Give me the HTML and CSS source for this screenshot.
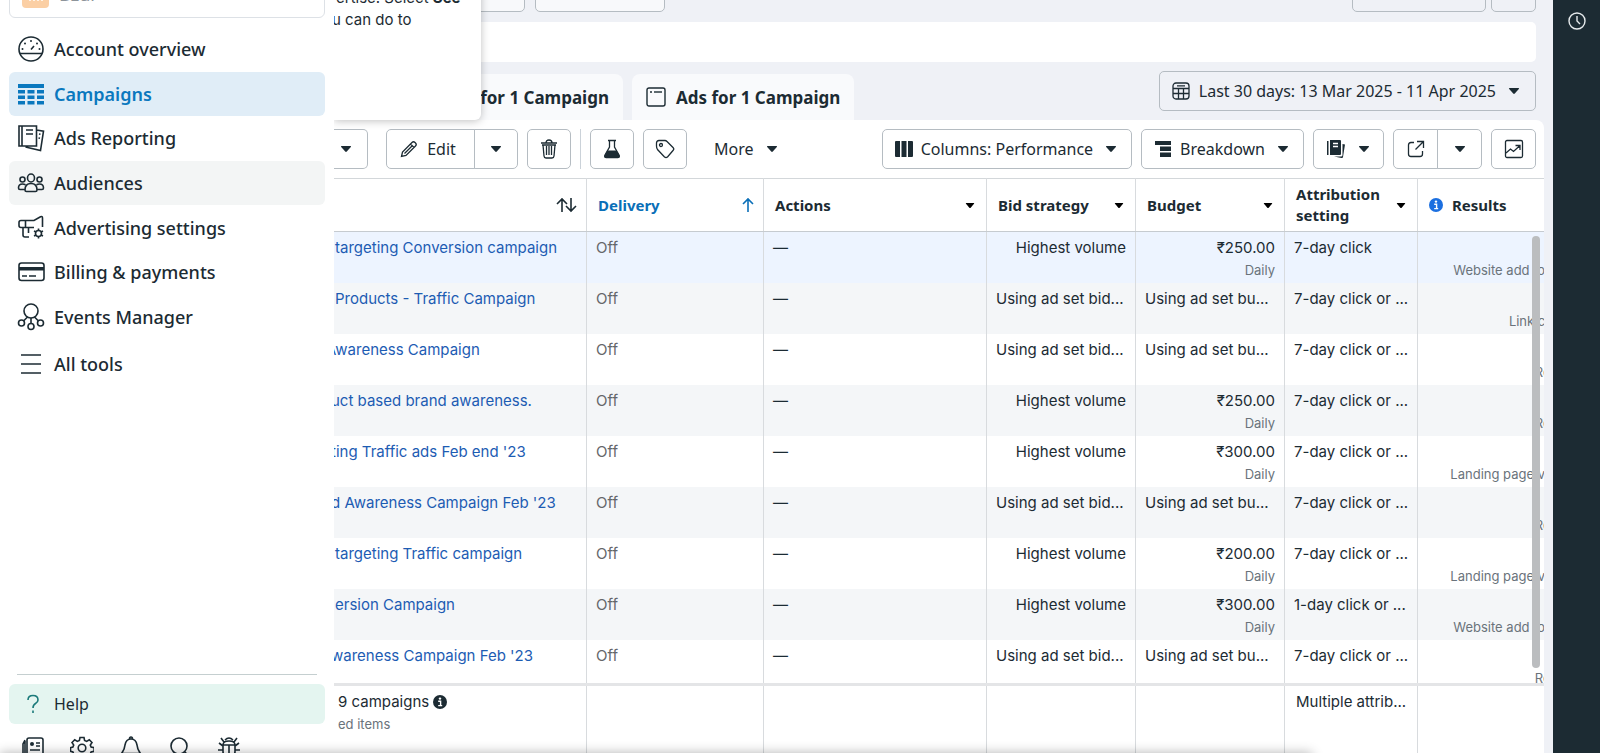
FILE: index.html
```html
<!DOCTYPE html>
<html lang="en">
<head>
    <meta charset="UTF-8">
    <meta name="viewport" content="width=device-width, initial-scale=1.0">
    <title>Ads Manager - Campaigns</title>
    <link rel="stylesheet" href="styles.css">
</head>
<body>
    <svg width="0" height="0" class="sprite" aria-hidden="true">
        <symbol id="caret" viewBox="0 0 12 8"><path d="M1.6 1h8.8q1.2 0 .4 1L6.8 6.6q-.8.8-1.6 0L1.2 2q-.8-1 .4-1z" fill="currentColor"/></symbol>
        <symbol id="arrow-up" viewBox="0 0 14 16"><path d="M7 15V2M2 7l5-5 5 5" fill="none" stroke="currentColor" stroke-width="1.6"/></symbol>
        <symbol id="info" viewBox="0 0 14 14"><circle cx="7" cy="7" r="7" fill="currentColor"/><circle cx="7" cy="3.6" r="1.2" fill="#fff"/><path d="M5.2 6.2H7.6V10.6M5.2 10.6h4" fill="none" stroke="#fff" stroke-width="1.4"/></symbol>
    </svg>

    <div class="app">
        <aside class="sidebar">
            <div class="account">
                <svg class="avatar" width="27" height="27" viewBox="0 0 27 27"><rect width="27" height="27" rx="4"/><path d="M8 20v-9M12 20v-5M16 20v-9M20 20v-5"/></svg>
                <span>Bzur</span>
            </div>

            <nav class="menu">
                <a href="#">
                    <svg width="28" height="28" viewBox="0 0 28 28"><circle cx="14" cy="14" r="12"/><path d="M3 18.500h22M14 14.500l3-3.500"/><g class="dots"><circle cx="5.500" cy="14" r="1"/><circle cx="8" cy="8.500" r="1"/><circle cx="14" cy="6" r="1"/><circle cx="20" cy="8.500" r="1"/><circle cx="22.500" cy="14" r="1"/></g></svg>
                    Account overview
                </a>
                <a href="#" class="active">
                    <svg width="28" height="28" viewBox="0 0 28 28"><path class="solid" d="M1 4h26v4H1zM1 10h7v3.500H1zM10.500 10h7v3.500h-7zM20 10h7v3.500h-7zM1 15.500h7V19H1zM10.500 15.500h7V19h-7zM20 15.500h7V19h-7zM1 21h7v3.500H1zM10.500 21h7v3.500h-7zM20 21h7v3.500h-7z"/></svg>
                    Campaigns
                </a>
                <a href="#">
                    <svg width="28" height="28" viewBox="0 0 28 28"><path d="M2 2h17.500v20H2zM5 2v20M9 6h7M9 10h7M19.500 6l7 1.200-3 19.300-15-3.500M22 10l1.500.3M21.500 14l1.500.3"/></svg>
                    Ads Reporting
                </a>
                <a href="#" class="hovered">
                    <svg width="28" height="28" viewBox="0 0 28 28"><ellipse cx="14" cy="9" rx="3.500" ry="4"/><circle cx="5.500" cy="10.500" r="2.500"/><circle cx="22.500" cy="10.500" r="2.500"/><path d="M8 21q0-6.500 6-6.500t6 6.500q0 1.500-1.500 1.500h-9Q8 22.500 8 21zM8 20.500H3q-1.500 0-1.500-1.500 0-4 4-4 1.500 0 3 .8M20 20.500h5q1.500 0 1.500-1.500 0-4-4-4-1.500 0-3 .8"/></svg>
                    Audiences
                </a>
                <a href="#">
                    <svg width="28" height="28" viewBox="0 0 28 28"><path d="M25.500 13V4q0-2-2-1.300L17 6.500H4Q2 6.500 2 8.500v3q0 2 2 2h13M8.500 6.500v7M6 13.500V21q0 2 2 2h4M11.500 13.500V19"/><circle cx="21.500" cy="19.500" r="3"/><path d="M21.500 14.500v2M21.500 22.500v2M17 17l2 1M24 21l2 1M26 17l-2 1M19 21l-2 1"/></svg>
                    Advertising settings
                </a>
                <a href="#">
                    <svg width="28" height="28" viewBox="0 0 28 28"><rect x="2" y="5" width="25" height="17.500" rx="2.500"/><path class="solid" d="M2 9h25v3.500H2z"/><path d="M5 18h5M12 18h7"/></svg>
                    Billing &amp; payments
                </a>
                <a href="#">
                    <svg width="28" height="28" viewBox="0 0 28 28"><circle cx="14" cy="8" r="7"/><circle cx="4.500" cy="20" r="3"/><circle cx="23.500" cy="20" r="3"/><circle cx="14" cy="23.500" r="3"/><path d="M10.500 14l-4 4M17.500 14l4 4M14 15v5.500"/></svg>
                    Events Manager
                </a>
            </nav>
            <a href="#" class="all-tools">
                <svg width="28" height="28" viewBox="0 0 28 28"><path d="M4 5h20M4 14h20M4 23h20"/></svg>
                All tools
            </a>

            <div class="sidebar-bottom">
                <a href="#" class="help">
                    <svg width="28" height="28" viewBox="0 0 28 28"><path d="M11 10q0-4.500 5-4.500t5 4.500q0 2-2.500 3.500T16 18M16 20.500v2.500"/></svg>
                    Help
                </a>
                <div class="shortcuts">
                    <button aria-label="News"><svg width="24" height="24" viewBox="0 0 24 24"><path d="M6 19V4q0-2 2-2h12q2 0 2 2v15q0 2-2 2H4q-2 0-2-2V8l2-4M4 5v14"/><circle class="solid" cx="11" cy="8" r="2"/><path d="M15 7h4M15 10h4M9 14h10"/></svg></button>
                    <button aria-label="Settings"><svg width="24" height="24" viewBox="0 0 24 24"><circle cx="12" cy="12" r="3.800"/><path d="M10 1.500h4l.6 3 2 .9 2.700-1.700 2.700 2.800-1.700 2.600.8 2 3 .6v3.600l-3 .6-.8 2 1.700 2.600-2.700 2.700-2.700-1.700-2 .8-.6 3h-4l-.6-3-2-.8-2.700 1.700L2 20.500l1.700-2.600-.8-2-2.400-.6v-3.600l2.400-.6.8-2L2 6.500l2.700-2.800 2.700 1.700 2-.9z"/></svg></button>
                    <button aria-label="Notifications"><svg width="24" height="24" viewBox="0 0 24 24"><path d="M12 3q5 0 6 6 .5 5 3.500 8.500H2.500Q5.500 14 6 9q1-6 6-6zM10.500 3q0-2 1.500-2t1.500 2"/></svg></button>
                    <button aria-label="Search"><svg width="24" height="24" viewBox="0 0 24 24"><circle cx="11" cy="10" r="8"/><path d="M17 16l5 6"/></svg></button>
                    <button aria-label="Report a problem"><svg width="24" height="24" viewBox="0 0 24 24"><path d="M6 9q0-4 6-4t6 4v6q0 6-6 6t-6-6zM6 9h12M12 9v12M7 6L4 2M17 6l3-4M8 4q4-4 8 0M6 10L2 7M18 10l4-3M6 14H1M18 14h5M6 17l-4 4M18 17l4 4"/></svg></button>
                </div>
            </div>
        </aside>

        <main class="main">
            <div class="top-row">
                <button class="btn top-first" aria-label="Account"></button>
                <button class="btn top-second" aria-label="Opportunities"></button>
                <span class="spacer"></span>
                <button class="btn top-review" aria-label="Review"></button>
                <button class="btn top-more" aria-label="Options"></button>
            </div>

            <div class="filter-bar"></div>

            <div class="tabs-row">
                <a href="#" class="tab tab-adsets">for 1 Campaign</a>
                <a href="#" class="tab">
                    <svg width="20" height="20" viewBox="0 0 20 20"><rect x="1" y="1" width="18" height="18" rx="2"/><path d="M8 5h8"/><circle class="solid" cx="5" cy="5" r="1"/></svg>
                    Ads for 1 Campaign
                </a>
                <span class="spacer"></span>
                <button class="btn date-btn">
                    <svg width="18" height="18" viewBox="0 0 18 18"><rect x="1" y="1" width="16" height="16" rx="3"/><path d="M5 3.800h8M1 6.500h16M1 11.500h16M6.500 6.500V17M11.500 6.500V17"/></svg>
                    <span>Last 30 days: 13 Mar 2025 - 11 Apr 2025</span>
                    <svg class="caret"><use href="#caret"/></svg>
                </button>
            </div>

            <section class="panel">
                <div class="toolbar">
                    <button class="btn cut-btn" aria-label="Duplicate options"><svg class="caret"><use href="#caret"/></svg></button>
                    <div class="btn-group edit-group">
                        <button class="btn edit-btn">
                            <svg width="18" height="18" viewBox="0 0 18 18"><path d="M1.500 16.500l1-4.500L12 2.500q1.500-1.500 3 0l.5.5q1.500 1.500 0 3L6 15.500zM10.500 4l3.500 3.500M12 6l-7.500 7.500"/></svg>
                            Edit
                        </button>
                        <button class="btn icon-btn" aria-label="Edit options"><svg class="caret"><use href="#caret"/></svg></button>
                    </div>
                    <button class="btn icon-btn" aria-label="Delete"><svg width="18" height="20" viewBox="0 0 18 20"><path d="M1 4h16M6 4q0-3 3-3t3 3M3 6l1 11q.2 2 2 2h6q1.800 0 2-2l1-11M6.500 7v9M9 7v9M11.500 7v9M2 6h14"/></svg></button>
                    <span class="divider"></span>
                    <button class="btn icon-btn" aria-label="A/B test"><svg width="18" height="20" viewBox="0 0 18 20"><path d="M5 1.500h8M6.500 1.500V8L2 16q-1 2.500 1 2.500h12q2 0 1-2.500L11.500 8V1.500"/><path class="solid" d="M4.500 11.500h9l3 5q.5 2.500-1.500 2.500H3q-2 0-1.500-2.500z"/></svg></button>
                    <button class="btn icon-btn" aria-label="Tags"><svg width="20" height="20" viewBox="0 0 20 20"><path d="M1.500 7V4q0-2.500 2.500-2.500h6q1 0 2 1l6 6q1.500 1.500 0 3L12.500 18q-1.500 1-3 0L2.500 10.500Q1.500 9 1.500 7z"/><circle cx="6" cy="6" r="1.500"/></svg></button>
                    <button class="more-btn">More <svg class="caret"><use href="#caret"/></svg></button>
                    <span class="spacer"></span>
                    <button class="btn wide-btn">
                        <svg width="18" height="16" viewBox="0 0 18 16"><path class="solid" d="M0 1q0-1 1-1h4v16H1q-1 0-1-1zM6.500 0h5v16h-5zM13 0h4q1 0 1 1v14q0 1-1 1h-4z"/></svg>
                        Columns: Performance
                        <svg class="caret"><use href="#caret"/></svg>
                    </button>
                    <button class="btn wide-btn">
                        <svg width="18" height="16" viewBox="0 0 18 16"><path class="solid" d="M1 0h16v4H1zM6 5.500h11V10H6zM6 11.500h11V16H6z"/></svg>
                        Breakdown
                        <svg class="caret"><use href="#caret"/></svg>
                    </button>
                    <button class="btn reports-btn" aria-label="Reports">
                        <svg width="18" height="18" viewBox="0 0 18 18"><path class="solid" d="M0 1h1.500v14H0zM3 0h10q1 0 1 1v13q0 1-1 1H3zM15.500 4l2.500.5-2 12.500q-.3 1.200-1.500 1L7 16.500h7q1.500 0 1.500-1.500z"/><path class="light" d="M6 3.500h5M6 6.500h5"/></svg>
                        <svg class="caret"><use href="#caret"/></svg>
                    </button>
                    <div class="btn-group">
                        <button class="btn icon-btn" aria-label="Export"><svg width="18" height="18" viewBox="0 0 18 18"><path d="M7 2.500H4Q1.500 2.500 1.500 5v9q0 2.500 2.500 2.500h9q2.500 0 2.500-2.500v-3M10 1.500h6.500V8M16.500 1.500l-8 8"/></svg></button>
                        <button class="btn icon-btn" aria-label="Export options"><svg class="caret"><use href="#caret"/></svg></button>
                    </div>
                    <button class="btn icon-btn" aria-label="Charts"><svg width="20" height="20" viewBox="0 0 20 20"><rect x="1.500" y="1.500" width="17" height="17" rx="1.500"/><path d="M2 14l4.500-4 3 2.500L15.500 7M11.500 6.500h4.500V11"/></svg></button>
                </div>

                <div class="table-body">
                    <table class="grid">
                        <colgroup><col><col class="w-delivery"><col class="w-actions"><col class="w-bid"><col class="w-bid"><col class="w-attr"><col class="w-results"></colgroup>
                        <thead>
                            <tr>
                                <th aria-label="Campaign"><div class="head sort-both"><svg class="arrow"><use href="#arrow-up"/></svg><svg class="arrow down"><use href="#arrow-up"/></svg></div></th>
                                <th class="sorted"><div class="head">Delivery <svg class="arrow"><use href="#arrow-up"/></svg></div></th>
                                <th><div class="head">Actions <svg class="caret small"><use href="#caret"/></svg></div></th>
                                <th><div class="head">Bid strategy <svg class="caret small"><use href="#caret"/></svg></div></th>
                                <th><div class="head">Budget <svg class="caret small"><use href="#caret"/></svg></div></th>
                                <th><div class="head">Attribution setting <svg class="caret small"><use href="#caret"/></svg></div></th>
                                <th><div class="head head-results"><svg class="info"><use href="#info"/></svg> Results</div></th>
                            </tr>
                        </thead>
                        <tbody>
                            <tr class="selected">
                                <td class="name"><a href="#">targeting Conversion campaign</a></td>
                                <td class="status">Off</td><td>—</td>
                                <td class="num">Highest volume</td>
                                <td class="num">₹250.00<small>Daily</small></td>
                                <td>7-day click</td>
                                <td class="num"><small class="second">Website add to cart</small></td>
                            </tr>
                            <tr>
                                <td class="name"><a href="#">Products - Traffic Campaign</a></td>
                                <td class="status">Off</td><td>—</td>
                                <td>Using ad set bid...</td>
                                <td>Using ad set bu...</td>
                                <td>7-day click or ...</td>
                                <td class="num"><small class="second">Link clicks</small></td>
                            </tr>
                            <tr>
                                <td class="name cut-letter"><a href="#">Awareness Campaign</a></td>
                                <td class="status">Off</td><td>—</td>
                                <td>Using ad set bid...</td>
                                <td>Using ad set bu...</td>
                                <td>7-day click or ...</td>
                                <td class="num"><small class="second">Reach</small></td>
                            </tr>
                            <tr>
                                <td class="name cut"><a href="#">uct based brand awareness.</a></td>
                                <td class="status">Off</td><td>—</td>
                                <td class="num">Highest volume</td>
                                <td class="num">₹250.00<small>Daily</small></td>
                                <td>7-day click or ...</td>
                                <td class="num"><small class="second">Reach</small></td>
                            </tr>
                            <tr>
                                <td class="name cut"><a href="#">ting Traffic ads Feb end '23</a></td>
                                <td class="status">Off</td><td>—</td>
                                <td class="num">Highest volume</td>
                                <td class="num">₹300.00<small>Daily</small></td>
                                <td>7-day click or ...</td>
                                <td class="num"><small class="second">Landing page views</small></td>
                            </tr>
                            <tr>
                                <td class="name cut"><a href="#">d Awareness Campaign Feb '23</a></td>
                                <td class="status">Off</td><td>—</td>
                                <td>Using ad set bid...</td>
                                <td>Using ad set bu...</td>
                                <td>7-day click or ...</td>
                                <td class="num"><small class="second">Reach</small></td>
                            </tr>
                            <tr>
                                <td class="name"><a href="#">targeting Traffic campaign</a></td>
                                <td class="status">Off</td><td>—</td>
                                <td class="num">Highest volume</td>
                                <td class="num">₹200.00<small>Daily</small></td>
                                <td>7-day click or ...</td>
                                <td class="num"><small class="second">Landing page views</small></td>
                            </tr>
                            <tr>
                                <td class="name"><a href="#">ersion Campaign</a></td>
                                <td class="status">Off</td><td>—</td>
                                <td class="num">Highest volume</td>
                                <td class="num">₹300.00<small>Daily</small></td>
                                <td>1-day click or ...</td>
                                <td class="num"><small class="second">Website add to cart</small></td>
                            </tr>
                            <tr>
                                <td class="name cut"><a href="#">wareness Campaign Feb '23</a></td>
                                <td class="status">Off</td><td>—</td>
                                <td>Using ad set bid...</td>
                                <td>Using ad set bu...</td>
                                <td>7-day click or ...</td>
                                <td class="num"><small class="second">Reach</small></td>
                            </tr>
                        </tbody>
                    </table>
                    <div class="scrollbar"></div>
                </div>

                <table class="grid totals">
                    <colgroup><col><col class="w-delivery"><col class="w-actions"><col class="w-bid"><col class="w-bid"><col class="w-attr"><col class="w-results"></colgroup>
                    <tbody>
                        <tr>
                            <td class="summary">9 campaigns <svg class="info"><use href="#info"/></svg><small>ed items</small></td>
                            <td></td><td></td><td></td><td></td>
                            <td>Multiple attrib...</td>
                            <td></td>
                        </tr>
                    </tbody>
                </table>
            </section>

            <div class="popup">
                <p>ertise. Select <b>See</b></p>
                <p class="cut">u can do to</p>
            </div>
        </main>

        <aside class="rail">
            <button aria-label="History"><svg width="18" height="18" viewBox="0 0 18 18"><circle cx="9" cy="9" r="8"/><path d="M9 4v5l3 3"/></svg></button>
        </aside>
        <div class="bottom-shade"></div>
    </div>
</body>
</html>
```
FILE: styles.css
```css
* {
    box-sizing: border-box;
}

body {
    margin: 0;
    font-family: "Noto Sans", sans-serif;
    font-size: 16px;
    color: #1c2b33;
    overflow: hidden;
}

button {
    font: inherit;
    color: inherit;
    background: none;
    border: 0;
    padding: 0;
    cursor: pointer;
}

a {
    color: inherit;
    text-decoration: none;
}

svg {
    flex: none;
    fill: none;
    stroke: currentColor;
    stroke-width: 1.4;
}

svg .solid,
svg .dots {
    fill: currentColor;
    stroke: none;
}

svg .light {
    stroke: #fff;
}

.sprite {
    position: absolute;
}

.caret {
    width: 12px;
    height: 8px;
    stroke: none;
}

.caret.small {
    width: 10px;
    height: 7px;
    color: #000;
}

.arrow {
    width: 14px;
    height: 16px;
    margin-right: -3px;
}

.arrow.down {
    transform: rotate(180deg);
    margin-left: -2px;
}

.info {
    width: 14px;
    height: 14px;
    stroke: none;
}

.spacer {
    flex: 1;
}

.app {
    position: relative;
    display: grid;
    grid-template-columns: 334px 1fr 47px;
    height: 100vh;
    overflow: hidden;
}

/* Sidebar */
.sidebar {
    display: flex;
    flex-direction: column;
    min-height: 0;
    padding: 0 9px;
    background: #fff;
    font-size: 18px;
    font-weight: 500;
}

.sidebar svg {
    stroke-width: 1.6;
}

.account {
    display: flex;
    align-items: center;
    gap: 10px;
    height: 48px;
    margin-top: -30px;
    padding: 0 12px;
    border: 1px solid #dde1e6;
    border-radius: 6px;
    color: #8d949a;
    font-weight: 400;
}

.avatar {
    fill: #fbcfa4;
    stroke: none;
}

.avatar path {
    stroke: #fff3e6;
    stroke-width: 2;
}

.menu {
    display: grid;
    grid-auto-rows: 1fr;
    height: 312px;
    margin-top: 9px;
}

.menu a,
.all-tools,
.help {
    display: flex;
    align-items: center;
    gap: 9px;
    padding: 0 8px;
    border-radius: 6px;
}

.menu .active {
    background: #e0edf7;
    color: #0a78be;
    font-weight: 600;
}

.menu .hovered {
    background: #f3f5f5;
}

.all-tools {
    height: 44px;
    margin-top: 3px;
}

.sidebar-bottom {
    margin-top: auto;
    padding-top: 10px;
    height: 79px;
}

.sidebar-bottom::before {
    content: "";
    display: block;
    height: 1px;
    margin: -10px 8px 9px;
    background: #c5cfd0;
}

.help {
    height: 40px;
    background: #e4f5f0;
    font-size: 16px;
    font-weight: 400;
}

.help svg {
    color: #1b7a7a;
}

.shortcuts {
    display: flex;
    gap: 25px;
    padding: 12px 12px 0;
}

/* Main area */
.main {
    position: relative;
    display: flex;
    flex-direction: column;
    min-width: 0;
    min-height: 0;
    overflow: hidden;
    padding-right: 9px;
    background: #eff1f6;
}

.btn {
    display: flex;
    align-items: center;
    justify-content: center;
    height: 40px;
    border: 1px solid #b5bcc2;
    border-radius: 5px;
}

.top-row {
    display: flex;
    gap: 10px;
    margin-top: -28px;
    padding-right: 8px;
}

.top-first {
    width: 191px;
    background: #f8f9fb;
}

.top-second {
    width: 130px;
    background: #f8f9fb;
}

.top-review {
    width: 134px;
}

.top-more {
    width: 45px;
    margin-left: -5px;
}

.filter-bar {
    height: 40px;
    margin: 10px 8px 0 0;
    border-radius: 0 5px 5px 0;
    background: #fff;
}

.tabs-row {
    display: flex;
    align-items: flex-end;
    gap: 9px;
    height: 58px;
    padding-right: 8px;
}

.tab {
    display: flex;
    align-items: center;
    gap: 10px;
    height: 46px;
    padding: 0 14px;
    border-radius: 8px 8px 0 0;
    background: #f9fafc;
    font-size: 17px;
    font-weight: 700;
}

.tab-adsets {
    width: 289px;
    justify-content: flex-end;
}

.date-btn {
    gap: 9px;
    margin-bottom: 9px;
    padding: 0 15px 0 12px;
}

.date-btn .caret {
    margin-left: 3px;
}

.panel {
    display: flex;
    flex: 1;
    flex-direction: column;
    min-height: 0;
    overflow: hidden;
    border-radius: 0 8px 0 0;
    background: #fff;
}

.toolbar {
    display: flex;
    align-items: center;
    gap: 9px;
    height: 58px;
    padding-right: 8px;
}

.cut-btn {
    width: 34px;
    padding-right: 10px;
    border-left: 0;
    border-radius: 0 5px 5px 0;
}

.btn-group {
    display: flex;
}

.btn-group .btn:first-child {
    border-radius: 5px 0 0 5px;
}

.btn-group .btn:last-child {
    margin-left: -1px;
    border-radius: 0 5px 5px 0;
}

.edit-group {
    margin-left: 9px;
}

.edit-btn {
    gap: 9px;
    width: 89px;
    padding-right: 5px;
}

.icon-btn {
    width: 44px;
}

.spacer ~ .icon-btn,
.spacer ~ .btn-group .icon-btn {
    width: 45px;
}

.icon-btn svg,
.btn svg {
    stroke-width: 1.3;
}

.divider {
    width: 1px;
    height: 40px;
    background: #cbd2d9;
}

.more-btn {
    display: flex;
    align-items: center;
    gap: 12px;
    padding-left: 18px;
}

.wide-btn {
    gap: 8px;
    padding: 0 14px 0 12px;
}

.wide-btn .caret {
    margin-left: 4px;
}

.reports-btn {
    gap: 13px;
    width: 71px;
}

/* Campaign table */
.table-body {
    position: relative;
    flex: 1;
    min-height: 0;
    overflow: hidden;
}

.grid {
    width: calc(100% + 39px);
    table-layout: fixed;
    border-collapse: collapse;
    font-family: Inter, sans-serif;
    font-size: 15px;
    line-height: 22px;
}

.w-delivery {
    width: 177px;
}

.w-actions {
    width: 223px;
}

.w-bid {
    width: 149px;
}

.w-attr {
    width: 133px;
}

.w-results {
    width: 165px;
}

.grid th {
    height: 53px;
    padding: 0 11px;
    border-top: 1px solid #d3d7da;
    border-bottom: 1px solid #c6cbd0;
    font-family: "Noto Sans", sans-serif;
    font-weight: 700;
    line-height: 21px;
    text-align: left;
}

.grid th,
.grid td {
    border-right: 1px solid #d8dbde;
}

.grid td {
    height: 51px;
    padding: 5px 9px 0;
    overflow: hidden;
    vertical-align: top;
    white-space: nowrap;
}

.grid tbody tr:nth-child(even) {
    background: #f4f6f8;
}

.grid tbody .selected {
    background: #edf4ff;
}

.head {
    display: flex;
    align-items: center;
    justify-content: space-between;
}

.sort-both {
    justify-content: flex-end;
}

.head-results {
    justify-content: flex-start;
    gap: 9px;
}

.head-results .info {
    color: #1b6fe0;
}

.sorted {
    color: #0a6fb8;
}

.grid .name {
    padding-left: 1px;
    color: #1d5cb3;
}

.grid .cut,
.popup .cut {
    text-indent: -4px;
}

.grid .cut-letter {
    text-indent: -9px;
}

.grid .status {
    color: #65676b;
}

.grid .num {
    text-align: right;
}

.grid small {
    display: block;
    color: #6a737b;
    font-size: 13px;
}

.grid .second {
    margin-top: 22px;
}

.scrollbar {
    position: absolute;
    top: 58px;
    right: 4px;
    bottom: 15px;
    width: 8px;
    border-radius: 4px;
    background: #bbbdbf;
}

.totals {
    height: 70px;
    border-top: 3px solid #e4e5e7;
}

.grid.totals td {
    padding: 5px 11px 0;
}

.grid.totals .summary {
    padding-left: 4px;
}

.summary .info {
    vertical-align: -2px;
}

.popup {
    position: absolute;
    top: -20px;
    left: 0;
    width: 147px;
    height: 140px;
    padding-top: 7px;
    overflow: hidden;
    border-radius: 0 0 6px 0;
    background: #fff;
    box-shadow: 0 1px 8px rgba(0, 0, 0, 0.25);
    font-family: Inter, sans-serif;
    font-size: 15px;
    line-height: 22px;
}

.popup p {
    margin: 0;
    padding-left: 2px;
    white-space: nowrap;
}

/* Right rail */
.rail {
    display: flex;
    justify-content: center;
    align-items: flex-start;
    padding-top: 12px;
    background: #1c2b33;
    color: #e6eaec;
}

.bottom-shade {
    position: absolute;
    left: 0;
    bottom: -14px;
    width: 82%;
    height: 14px;
    box-shadow: 0 0 12px rgba(0, 0, 0, 0.3);
    pointer-events: none;
}
```
